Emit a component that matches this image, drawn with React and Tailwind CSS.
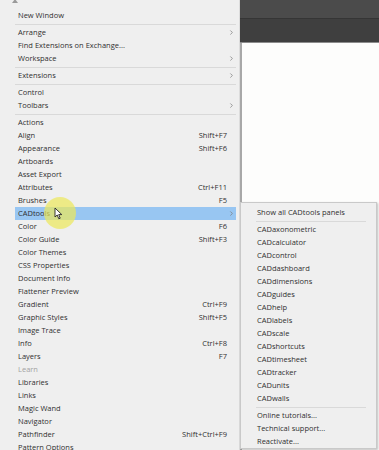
import { ChevronRight } from 'lucide-react';

const mainItems = [
  { label: 'New Window' },
  'sep',
  { label: 'Arrange', sub: true },
  { label: 'Find Extensions on Exchange...' },
  { label: 'Workspace', sub: true },
  'sep',
  { label: 'Extensions', sub: true },
  'sep',
  { label: 'Control' },
  { label: 'Toolbars', sub: true },
  'sep',
  { label: 'Actions' },
  { label: 'Align', key: 'Shift+F7' },
  { label: 'Appearance', key: 'Shift+F6' },
  { label: 'Artboards' },
  { label: 'Asset Export' },
  { label: 'Attributes', key: 'Ctrl+F11' },
  { label: 'Brushes', key: 'F5' },
  { label: 'CADtools', sub: true, active: true },
  { label: 'Color', key: 'F6' },
  { label: 'Color Guide', key: 'Shift+F3' },
  { label: 'Color Themes' },
  { label: 'CSS Properties' },
  { label: 'Document Info' },
  { label: 'Flattener Preview' },
  { label: 'Gradient', key: 'Ctrl+F9' },
  { label: 'Graphic Styles', key: 'Shift+F5' },
  { label: 'Image Trace' },
  { label: 'Info', key: 'Ctrl+F8' },
  { label: 'Layers', key: 'F7' },
  { label: 'Learn', disabled: true },
  { label: 'Libraries' },
  { label: 'Links' },
  { label: 'Magic Wand' },
  { label: 'Navigator' },
  { label: 'Pathfinder', key: 'Shift+Ctrl+F9' },
  { label: 'Pattern Options' },
];

const subItems = [
  'Show all CADtools panels',
  'sep',
  'CADaxonometric',
  'CADcalculator',
  'CADcontrol',
  'CADdashboard',
  'CADdimensions',
  'CADguides',
  'CADhelp',
  'CADlabels',
  'CADscale',
  'CADshortcuts',
  'CADtimesheet',
  'CADtracker',
  'CADunits',
  'CADwalls',
  'sep',
  'Online tutorials...',
  'Technical support...',
  'Reactivate...',
];

const Separator = () => (
  <div className="h-[4px] flex items-center">
    <div className="w-full h-px bg-[#d9d9d9]"></div>
  </div>
);

const MenuRow = ({ item }) => (
  <div
    className={`h-[13px] flex items-center pl-[3px] ${
      item.active ? 'bg-[#98c6f2]' : ''
    } ${item.disabled ? 'text-[#a3a3a3]' : 'text-[#2f2f2f]'}`}
  >
    <span className="flex-1 whitespace-nowrap">{item.label}</span>
    {item.key && <span className="whitespace-nowrap">{item.key}</span>}
    <span className="w-[9px] flex justify-center">
      {item.sub && <ChevronRight size={7} strokeWidth={2.5} className="text-[#7a7a7a]" />}
    </span>
  </div>
);

export default function App() {
  return (
    <div
      className="relative w-[379px] h-[450px] overflow-hidden flex bg-[#fdfdfd] text-[7.5px]"
      style={{ fontFamily: '"Open Sans", "Noto Sans", sans-serif' }}
    >
      {/* main Window menu */}
      <div className="w-[240px] h-full shrink-0 bg-[#efefef] border-r border-[#dcdcdc] pl-[15px] pr-[3px]">
        <div className="h-[9px] flex justify-start">
          <svg width="6" height="4" viewBox="0 0 6 4" className="mt-[-1px] ml-[-3px]">
            <path d="M0 4 L3 0 L6 4 Z" fill="#9a9a9a" />
          </svg>
        </div>
        {mainItems.map((item, i) =>
          item === 'sep' ? <Separator key={i} /> : <MenuRow key={i} item={item} />
        )}
      </div>

      {/* document area */}
      <div className="flex-1 flex flex-col">
        <div className="h-[19px] bg-[#4b4b4b] border-b border-[#353535]"></div>
        <div className="h-[24px] bg-[#3f3f3f] border-b border-[#8c8c8c]"></div>
        <div className="flex-1 bg-[#fdfdfc] border-l-2 border-[#a8a8a8]"></div>
      </div>

      {/* CADtools submenu */}
      <div className="absolute left-[240px] top-[202px] w-[137px] h-[247px] bg-[#efefef] border border-[#c9c9c9] shadow-[1px_1px_2px_rgba(0,0,0,0.25)] pt-[3px] pl-[15px] pr-[10px]">
        {subItems.map((s, i) =>
          s === 'sep' ? (
            <Separator key={i} />
          ) : (
            <div key={i} className="h-[13px] flex items-center pl-px text-[#2f2f2f] whitespace-nowrap">
              {s}
            </div>
          )
        )}
      </div>

      {/* cursor highlight */}
      <div className="absolute left-[44px] top-[197px] w-[32px] h-[32px] rounded-full bg-[#ece85a] opacity-70"></div>
      <svg className="absolute left-[54px] top-[207px]" width="9" height="13" viewBox="0 0 9 13">
        <path d="M1 1 L1 10 L3.2 8 L4.8 11.8 L6.2 11.2 L4.7 7.6 L7.8 7.6 Z" fill="#ffffff" stroke="#222" strokeWidth="0.9" strokeLinejoin="round" />
      </svg>
    </div>
  );
}
